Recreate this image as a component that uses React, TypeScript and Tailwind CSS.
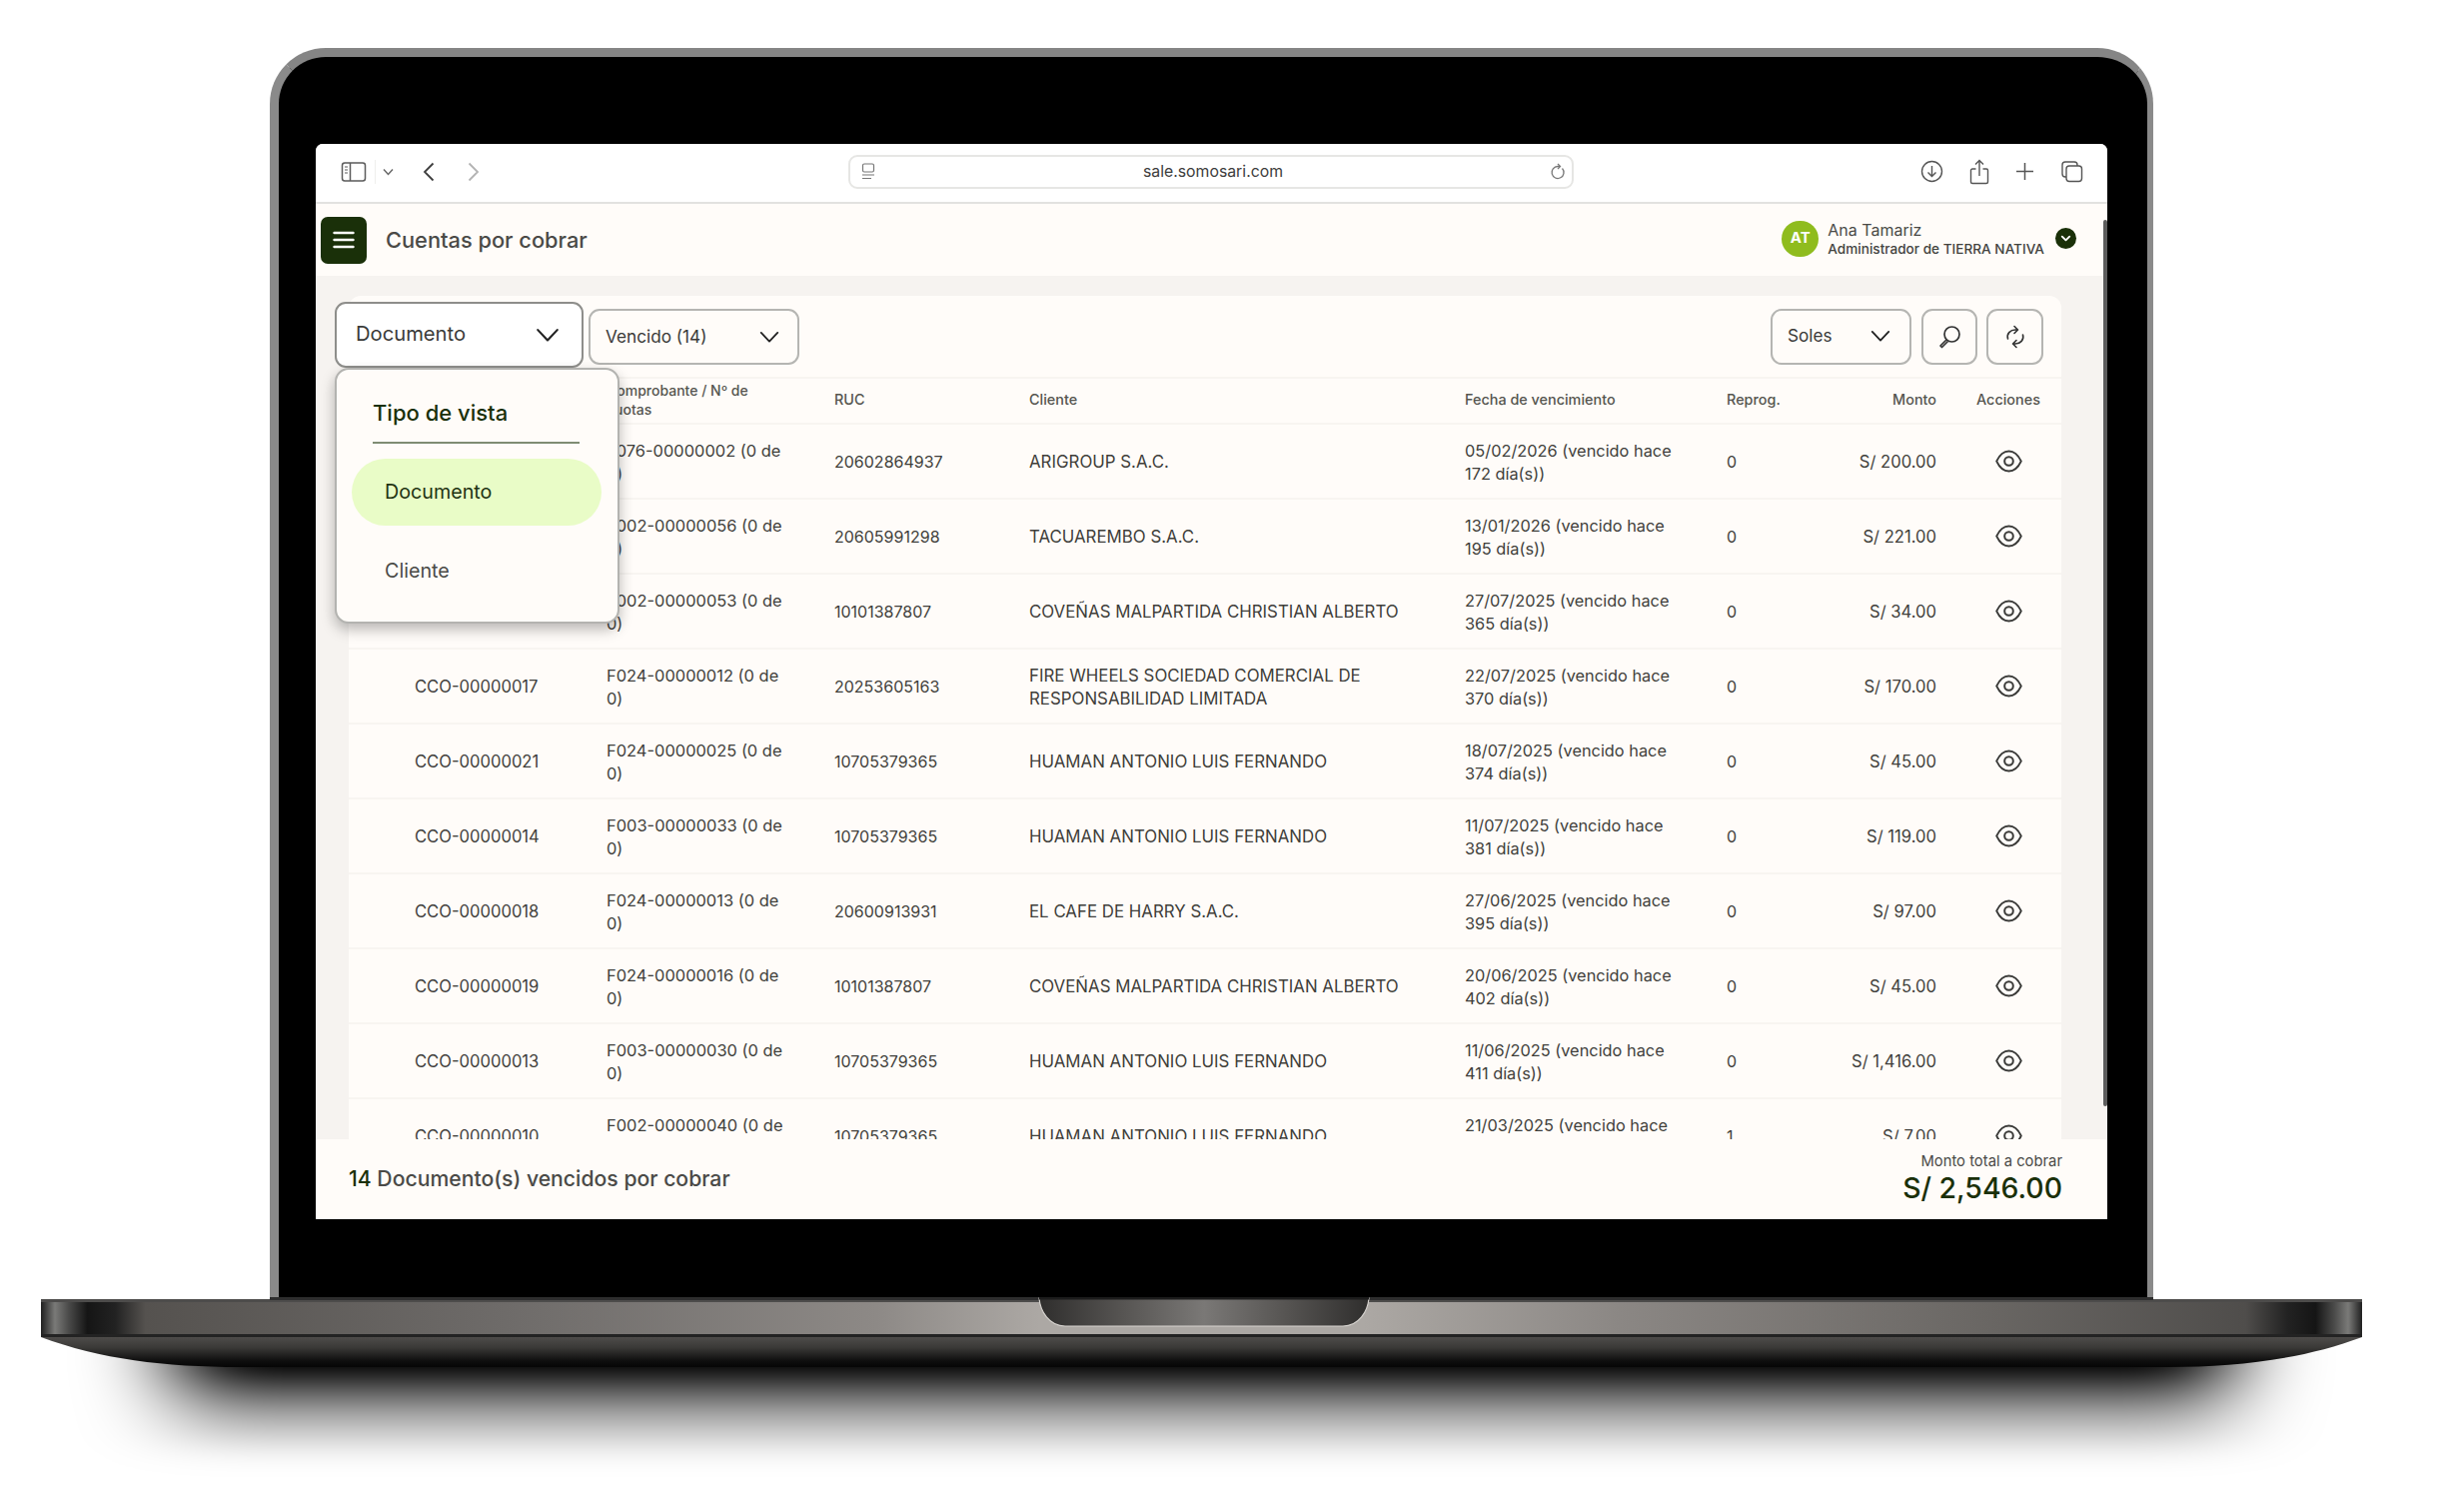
import React from "react";
import { ChevronDown } from "lucide-react";

const rows = [
  ["", "F076-00000002 (0 de", "20602864937", ["ARIGROUP S.A.C."], "05/02/2026 (vencido hace", "172 día(s))", "0", "S/ 200.00"],
  ["", "F002-00000056 (0 de", "20605991298", ["TACUAREMBO S.A.C."], "13/01/2026 (vencido hace", "195 día(s))", "0", "S/ 221.00"],
  ["", "F002-00000053 (0 de", "10101387807", ["COVEÑAS MALPARTIDA CHRISTIAN ALBERTO"], "27/07/2025 (vencido hace", "365 día(s))", "0", "S/ 34.00"],
  ["CCO-00000017", "F024-00000012 (0 de", "20253605163", ["FIRE WHEELS SOCIEDAD COMERCIAL DE", "RESPONSABILIDAD LIMITADA"], "22/07/2025 (vencido hace", "370 día(s))", "0", "S/ 170.00"],
  ["CCO-00000021", "F024-00000025 (0 de", "10705379365", ["HUAMAN ANTONIO LUIS FERNANDO"], "18/07/2025 (vencido hace", "374 día(s))", "0", "S/ 45.00"],
  ["CCO-00000014", "F003-00000033 (0 de", "10705379365", ["HUAMAN ANTONIO LUIS FERNANDO"], "11/07/2025 (vencido hace", "381 día(s))", "0", "S/ 119.00"],
  ["CCO-00000018", "F024-00000013 (0 de", "20600913931", ["EL CAFE DE HARRY S.A.C."], "27/06/2025 (vencido hace", "395 día(s))", "0", "S/ 97.00"],
  ["CCO-00000019", "F024-00000016 (0 de", "10101387807", ["COVEÑAS MALPARTIDA CHRISTIAN ALBERTO"], "20/06/2025 (vencido hace", "402 día(s))", "0", "S/ 45.00"],
  ["CCO-00000013", "F003-00000030 (0 de", "10705379365", ["HUAMAN ANTONIO LUIS FERNANDO"], "11/06/2025 (vencido hace", "411 día(s))", "0", "S/ 1,416.00"],
  ["CCO-00000010", "F002-00000040 (0 de", "10705379365", ["HUAMAN ANTONIO LUIS FERNANDO"], "21/03/2025 (vencido hace", "487 día(s))", "1", "S/ 7.00"],
] as const;

function Chevron({ size = 22, sw = 2 }: { size?: number; sw?: number }) {
  return (
    <svg width={size} height={size} viewBox="0 0 24 24" fill="none" stroke="#222" strokeWidth={sw} strokeLinecap="round" strokeLinejoin="round">
      <path d="M3 7.5 L12 17 L21 7.5" />
    </svg>
  );
}

function EyeIcon() {
  return (
    <svg width="27" height="23" viewBox="0 0 27 23" fill="none" stroke="#3a3a38" strokeWidth="1.8">
      <path d="M1.2 11.5 C4.5 4.5 9 1.5 13.5 1.5 C18 1.5 22.5 4.5 25.8 11.5 C22.5 18.5 18 21.5 13.5 21.5 C9 21.5 4.5 18.5 1.2 11.5 Z" />
      <circle cx="13.5" cy="11.5" r="4.3" strokeWidth="2" />
    </svg>
  );
}

function BrowserBar() {
  return (
    <div className="flex h-[60px] shrink-0 items-center border-b-2 border-[#e2e2e0] bg-white pb-[3px] pl-[25px] pr-[24px]">
      <svg width="26" height="20" viewBox="0 0 26 20" fill="none" stroke="#5b5b5b" strokeWidth="1.5">
        <rect x="1.5" y="1" width="23" height="18" rx="2.5" />
        <path d="M9.5 1 V19" />
        <path d="M4 5h3M4 8h3M4 11h3" strokeWidth="1.1" />
      </svg>
      <div className="ml-[8px] h-[24px] w-[1px] bg-[#efefed]" />
      <svg className="ml-[7px]" width="11" height="8" viewBox="0 0 11 8" fill="none" stroke="#666" strokeWidth="1.4">
        <path d="M1 1.5 L5.5 6.5 L10 1.5" />
      </svg>
      <svg className="ml-[29px]" width="12" height="20" viewBox="0 0 12 20" fill="none" stroke="#3e3e3e" strokeWidth="1.8">
        <path d="M10.5 1.5 L2 10 L10.5 18.5" />
      </svg>
      <svg className="ml-[33px]" width="12" height="20" viewBox="0 0 12 20" fill="none" stroke="#b3b3b3" strokeWidth="1.8">
        <path d="M1.5 1.5 L10 10 L1.5 18.5" />
      </svg>
      <div className="ml-[369px] flex h-[34px] w-[726px] items-center rounded-[9px] border-2 border-[#e6e6e4] bg-white pl-[10px] pr-[6px]">
        <svg width="16" height="17" viewBox="0 0 16 17" fill="none" stroke="#777" strokeWidth="1.2">
          <rect x="2.5" y="1" width="11" height="8" rx="1.5" />
          <path d="M2 12h12M2 15.5h9" />
        </svg>
        <span className="flex-1 text-center text-[15.8px] text-[#3d3d3d]">sale.somosari.com</span>
        <svg width="16" height="18" viewBox="0 0 16 18" fill="none" stroke="#777" strokeWidth="1.3">
          <path d="M12.5 5.5 A6 6 0 1 1 8 3.5 H10" />
          <path d="M8 1 L10.5 3.5 L8 6" />
        </svg>
      </div>
      <div className="ml-auto flex items-center gap-[26px]">
        <svg width="23" height="23" viewBox="0 0 23 23" fill="none" stroke="#555" strokeWidth="1.4">
          <circle cx="11.5" cy="11.5" r="10" />
          <path d="M11.5 6 V16 M7.5 12.5 L11.5 16.5 L15.5 12.5" />
        </svg>
        <svg width="20" height="26" viewBox="0 0 20 26" fill="none" stroke="#555" strokeWidth="1.4">
          <path d="M6.5 10 H3 a1.5 1.5 0 0 0 -1.5 1.5 V23 a1.5 1.5 0 0 0 1.5 1.5 H17 a1.5 1.5 0 0 0 1.5 -1.5 V11.5 a1.5 1.5 0 0 0 -1.5 -1.5 H13.5" />
          <path d="M10 17 V2 M6 5.5 L10 1.5 L14 5.5" />
        </svg>
        <svg width="19" height="19" viewBox="0 0 19 19" fill="none" stroke="#555" strokeWidth="1.5">
          <path d="M9.5 1 V18 M1 9.5 H18" />
        </svg>
        <svg width="23" height="23" viewBox="0 0 23 23" fill="none" stroke="#555" strokeWidth="1.4">
          <rect x="6" y="6" width="15.5" height="15.5" rx="3" />
          <path d="M6 17 H5 a3 3 0 0 1 -3 -3 V5 a3 3 0 0 1 3 -3 H14 a3 3 0 0 1 3 3 V6" />
        </svg>
      </div>
    </div>
  );
}

function AppHeader() {
  return (
    <div className="flex h-[72px] shrink-0 items-center bg-[#fffcf9] pl-[5px]">
      <div className="flex h-[47px] w-[46px] items-center justify-center rounded-[7px] bg-[#1a3009]">
        <svg width="22" height="18" viewBox="0 0 22 18" stroke="#fff" strokeWidth="2.4" strokeLinecap="round">
          <path d="M1.5 2 H20.5 M1.5 9 H20.5 M1.5 16 H20.5" />
        </svg>
      </div>
      <h1 className="ml-[19px] text-[21.8px] font-medium text-[#4a4a47]">Cuentas por cobrar</h1>
      <div className="-mt-[3px] ml-auto flex items-center pr-[31px]">
        <div className="flex h-[36px] w-[37px] items-center justify-center rounded-full bg-[#8fbc1e] text-[15px] font-bold text-white">AT</div>
        <div className="ml-[9px] flex flex-col">
          <span className="text-[16px] leading-[20px] text-[#4a4a47]">Ana Tamariz</span>
          <span className="text-[13.6px] leading-[18px] font-medium text-[#43433f]">Administrador de TIERRA NATIVA</span>
        </div>
        <div className="ml-[11px] flex h-[21px] w-[21px] items-center justify-center rounded-full bg-[#1a3009]">
          <ChevronDown size={15} color="#fff" strokeWidth={3} />
        </div>
      </div>
    </div>
  );
}

function Toolbar() {
  return (
    <div className="flex h-[81px] shrink-0 items-center pr-[18px]">
      <div className="-ml-[14px] -mt-[4px] flex h-[66px] w-[249px] shrink-0 items-center justify-between rounded-[11px] border-2 border-[#8e8e8b] bg-white pl-[19px] pr-[21px]">
        <span className="text-[20.2px] text-[#3a3a38]">Documento</span>
        <Chevron size={26} />
      </div>
      <div className="ml-[5px] flex h-[56px] w-[211px] items-center justify-between rounded-[11px] border-2 border-[#b5b5b2] pl-[15px] pr-[17px]">
        <span className="text-[17.2px] text-[#3a3a38]">Vencido (14)</span>
        <Chevron />
      </div>
      <div className="ml-auto flex h-[56px] w-[141px] items-center justify-between rounded-[11px] border-2 border-[#b5b5b2] pb-[2px] pl-[15px] pr-[18px]">
        <span className="text-[17.2px] text-[#3a3a38]">Soles</span>
        <Chevron />
      </div>
      <div className="ml-[10px] flex h-[56px] w-[56px] items-center justify-center rounded-[11px] border-2 border-[#b5b5b2]">
        <svg width="24" height="24" viewBox="0 0 24 24" fill="none" stroke="#333" strokeWidth="1.7">
          <circle cx="14.5" cy="9.5" r="7.5" />
          <path d="M9 15 L3 21 L4.5 22.5 L10.5 16.5" strokeLinejoin="round" />
        </svg>
      </div>
      <div className="ml-[9px] flex h-[56px] w-[57px] items-center justify-center rounded-[11px] border-2 border-[#b5b5b2]">
        <svg width="24" height="24" viewBox="0 0 24 24" fill="none" stroke="#333" strokeWidth="1.6" strokeLinecap="round" strokeLinejoin="round">
          <path d="M4.5 14 C3 9 7 5 12 5 H14 M11 1.5 L14.5 5 L11 8.5" />
          <path d="M19.5 10 C21 15 17 19 12 19 H10 M13 22.5 L9.5 19 L13 15.5" />
        </svg>
      </div>
    </div>
  );
}

function TableHead() {
  return (
    <div className="flex h-[48px] shrink-0 items-center border-y-2 border-[#f8f5f1] pb-[2px] text-[14.4px] leading-[18px] font-medium text-[#55554f]">
      <div className="w-[258px]" />
      <div className="w-[228px] text-[14px] leading-[19px]">
        Comprobante / Nº de<br />cuotas
      </div>
      <div className="w-[195px]">RUC</div>
      <div className="w-[436px]">Cliente</div>
      <div className="w-[262px]">Fecha de vencimiento</div>
      <div className="w-[90px]">Reprog.</div>
      <div className="w-[120px] text-right">Monto</div>
      <div className="w-[125px] pl-[40px]">Acciones</div>
    </div>
  );
}

function TableRow({ r }: { r: (typeof rows)[number] }) {
  return (
    <div className="flex h-[75px] shrink-0 items-center border-b-2 border-[#f8f5f1] pt-[3px] text-[16px] leading-[23.5px] text-[#3f3f3b]">
      <div className="w-[258px] pl-[66px] text-[16.6px]">{r[0]}</div>
      <div className="w-[228px] text-[16.45px]">
        <div>{r[1]}</div>
        <div>0)</div>
      </div>
      <div className="w-[195px]">{r[2]}</div>
      <div className="w-[436px] text-[16.85px]">
        {r[3].map((l) => (
          <div key={l}>{l}</div>
        ))}
      </div>
      <div className="w-[262px] text-[16.35px]">
        <div>{r[4]}</div>
        <div>{r[5]}</div>
      </div>
      <div className="w-[90px]">{r[6]}</div>
      <div className="w-[120px] text-right text-[16.6px]">{r[7]}</div>
      <div className="-mt-[3px] flex w-[125px] justify-center pl-[19px]">
        <EyeIcon />
      </div>
    </div>
  );
}

function ViewPopup() {
  return (
    <div className="absolute left-[19px] top-[92px] z-10 flex h-[256px] w-[285px] flex-col rounded-[14px] border-2 border-[#b3b3b0] bg-[#fffcf9] px-[15px] shadow-[0_6px_14px_rgba(0,0,0,0.28)]">
      <div className="ml-[21px] mt-[27px] w-[207px] border-b-2 border-[#7f8d74] pb-[13px] text-[22px] font-medium leading-[32px] text-[#1a3009]">Tipo de vista</div>
      <div className="mt-[15px] flex h-[67px] w-[250px] items-center rounded-[34px] bg-[#e9fcc7] pl-[33px] text-[19.7px] text-[#1f3312]">Documento</div>
      <div className="mt-[24px] pl-[33px] text-[19.7px] leading-[42px] text-[#4a4a47]">Cliente</div>
    </div>
  );
}

function Footer() {
  return (
    <div className="flex h-[80px] shrink-0 items-center justify-between bg-[#fffcf9] pl-[33px] pr-[45px]">
      <div className="text-[21.2px] font-medium text-[#4a4a47]">
        <span className="text-[#1a3009]">14</span> Documento(s) vencidos por cobrar
      </div>
      <div className="flex flex-col items-end">
        <span className="text-[14.8px] leading-[18px] text-[#4a4a47]">Monto total a cobrar</span>
        <span className="text-[28.4px] leading-[36px] font-medium text-[#1a3009]">S/ 2,546.00</span>
      </div>
    </div>
  );
}

function Screen() {
  return (
    <div className="relative flex h-[1076px] w-[1793px] flex-col overflow-hidden rounded-t-[7px] bg-[#fffcf9]">
      <BrowserBar />
      <AppHeader />
      <div className="relative flex min-h-0 flex-1 bg-[#f6f3f0] pl-[33px] pt-[20px]">
        <div className="flex min-h-0 w-[1714px] flex-col rounded-t-[12px] bg-[#fffcf9]">
          <Toolbar />
          <TableHead />
          <div className="flex min-h-0 flex-1 flex-col overflow-hidden">
            {rows.map((r, i) => (
              <TableRow key={i} r={r} />
            ))}
          </div>
        </div>
        <ViewPopup />
      </div>
      <Footer />
      <div className="absolute right-0 top-[76px] h-[887px] w-[4px] rounded-full bg-[#5c5c5c]" />
    </div>
  );
}

function LaptopBase() {
  return (
    <svg width="2466" height="214" viewBox="0 0 2466 214" className="block">
      <defs>
        <linearGradient id="band" gradientUnits="userSpaceOnUse" x1="41" x2="2364" y1="0" y2="0">
          <stop offset="0" stopColor="#1f1f1f" />
          <stop offset="0.006" stopColor="#7a7a78" />
          <stop offset="0.012" stopColor="#4a4a49" />
          <stop offset="0.02" stopColor="#151515" />
          <stop offset="0.032" stopColor="#222" />
          <stop offset="0.045" stopColor="#55524f" />
          <stop offset="0.2" stopColor="#6e6b69" />
          <stop offset="0.36" stopColor="#8d8986" />
          <stop offset="0.43" stopColor="#aca8a4" />
          <stop offset="0.57" stopColor="#aca8a4" />
          <stop offset="0.68" stopColor="#8b8784" />
          <stop offset="0.84" stopColor="#696663" />
          <stop offset="0.95" stopColor="#4f4d4b" />
          <stop offset="0.968" stopColor="#222" />
          <stop offset="0.98" stopColor="#151515" />
          <stop offset="0.988" stopColor="#4a4a49" />
          <stop offset="0.994" stopColor="#7a7a78" />
          <stop offset="1" stopColor="#1f1f1f" />
        </linearGradient>
        <linearGradient id="lower" x1="0" x2="0" y1="0" y2="1">
          <stop offset="0" stopColor="#4e4c4a" />
          <stop offset="0.35" stopColor="#3a3937" />
          <stop offset="0.8" stopColor="#0e0e0e" />
          <stop offset="1" stopColor="#050505" />
        </linearGradient>
        <linearGradient id="notch" gradientUnits="userSpaceOnUse" x1="1040" x2="1370" y1="0" y2="0">
          <stop offset="0" stopColor="#2f2e2d" />
          <stop offset="0.25" stopColor="#565452" />
          <stop offset="0.5" stopColor="#7a7876" />
          <stop offset="0.75" stopColor="#565452" />
          <stop offset="1" stopColor="#2f2e2d" />
        </linearGradient>
        <linearGradient id="shadow" x1="0" x2="0" y1="0" y2="1">
          <stop offset="0" stopColor="#000" stopOpacity="1" />
          <stop offset="0.22" stopColor="#000" stopOpacity="1" />
          <stop offset="0.36" stopColor="#000" stopOpacity="0.72" />
          <stop offset="0.58" stopColor="#000" stopOpacity="0.36" />
          <stop offset="0.9" stopColor="#000" stopOpacity="0.04" />
          <stop offset="1" stopColor="#000" stopOpacity="0" />
        </linearGradient>
        <filter id="blur" x="-10%" y="-50%" width="120%" height="200%">
          <feGaussianBlur stdDeviation="45 10" />
        </filter>
      </defs>
      <path d="M175 40 H2230 V170 H175 Z" fill="url(#shadow)" filter="url(#blur)" />
      <path d="M41 40 C100 62 165 70 240 70 H2170 C2240 70 2305 62 2364 40 Z" fill="url(#lower)" />
      <rect x="41" y="4" width="2323" height="34" fill="url(#band)" />
      <rect x="41" y="37" width="2323" height="3" fill="#232323" />
      <rect x="41" y="2" width="2323" height="3" fill="#4d4c4b" />
      <rect x="270" y="0" width="1885" height="3" fill="#2e2e2e" />
      <path d="M1040 1 C1041 14 1050 29 1066 29 H1344 C1360 29 1369 14 1370 1 Z" fill="url(#notch)" stroke="#d5d2ce" strokeWidth="1.2" />
      <path d="M1040 1 H1370" stroke="#1c1c1c" strokeWidth="3" />
    </svg>
  );
}

export default function App() {
  return (
    <div className="h-[1512px] w-[2466px] overflow-hidden bg-white pt-[48px] font-['Inter',sans-serif]">
      <div className="ml-[270px] h-[1250px] w-[1885px] rounded-t-[56px] border-t-[9px] border-r-[6px] border-l-[9px] border-t-[#858585] border-r-[#8a8a8a] border-l-[#8a8a8a] bg-black pl-[37px] pt-[87px]">
        <Screen />
      </div>
      <LaptopBase />
    </div>
  );
}
